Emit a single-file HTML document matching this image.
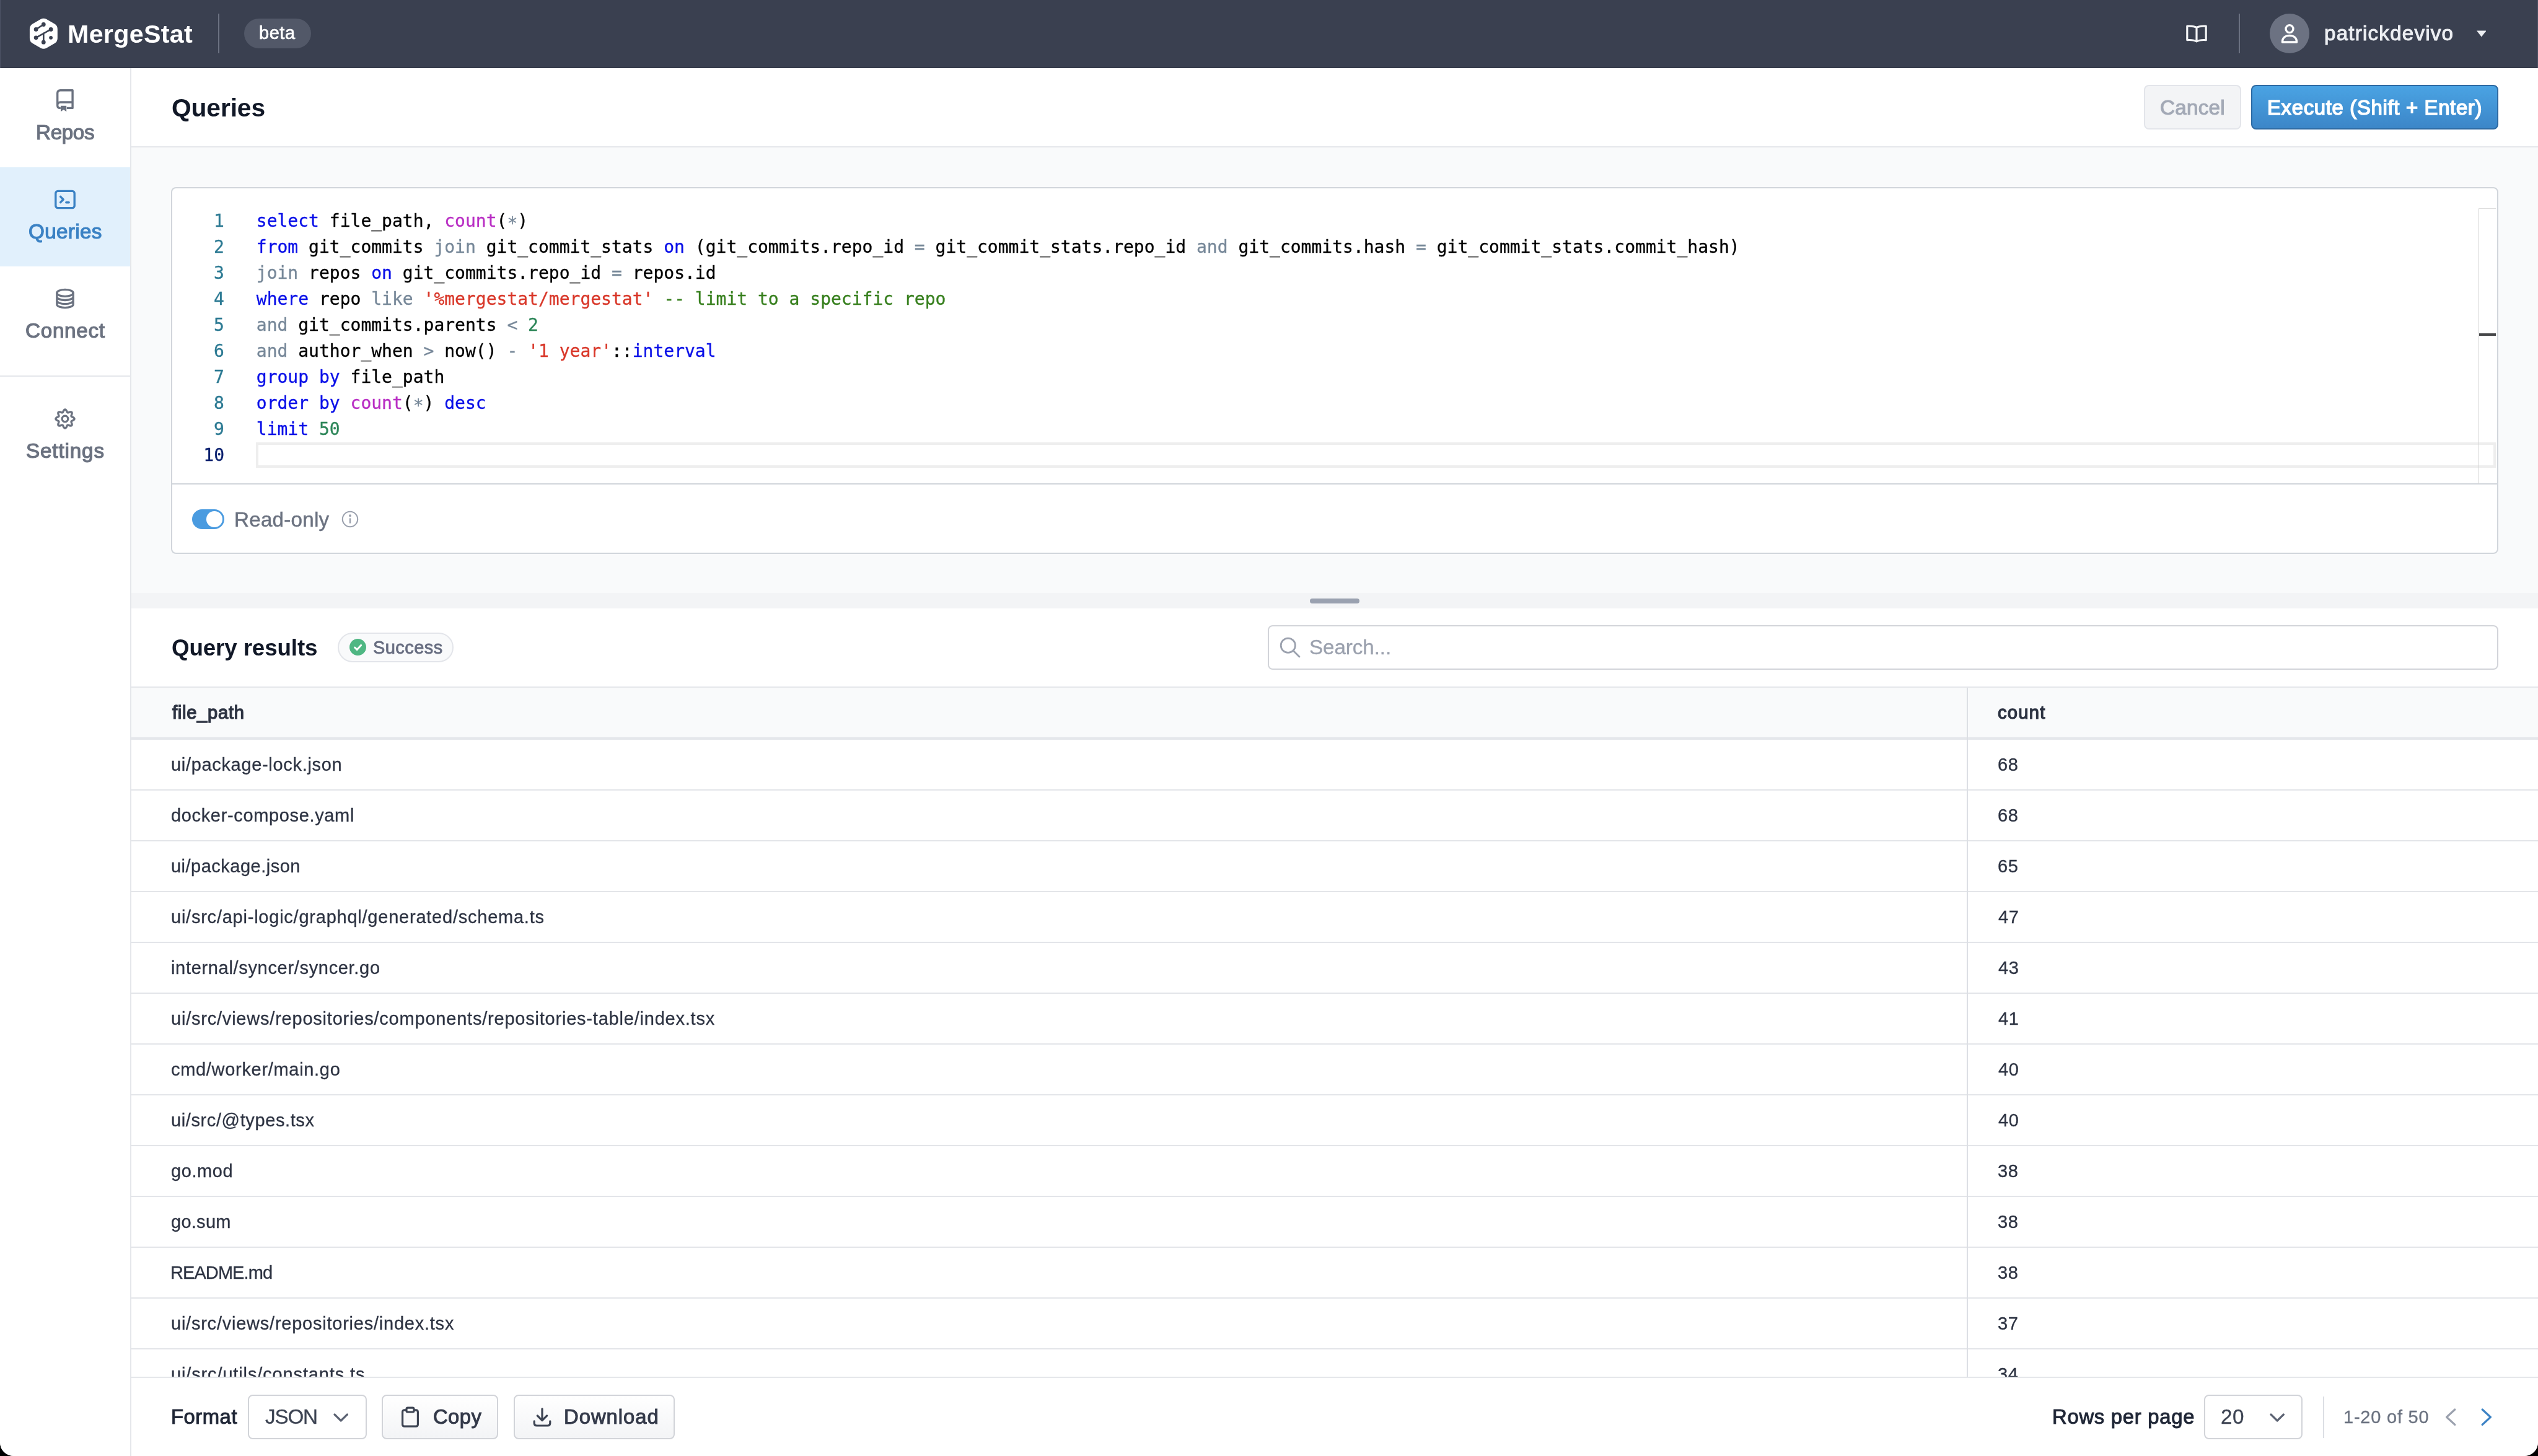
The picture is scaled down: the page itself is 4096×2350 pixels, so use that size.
<!DOCTYPE html>
<html lang="en">
<head>
<meta charset="utf-8">
<title>MergeStat - Queries</title>
<style>
*{box-sizing:border-box;margin:0;padding:0}
html,body{width:4096px;height:2350px;overflow:hidden;background:#000}
body{font-family:"Liberation Sans",sans-serif;color:#1f2636}
#app{position:absolute;left:0;top:0;width:4096px;height:2350px;will-change:transform;background:#fff;overflow:hidden;border-radius:0 0 22px 22px}
#app *{position:absolute}
.t{white-space:pre;font-family:"Liberation Sans",sans-serif}
.m{white-space:pre;font-family:"DejaVu Sans Mono","Liberation Mono",monospace;font-size:28px;line-height:33px;color:#000;-webkit-text-stroke:0.3px}
.m span{position:static !important}
.k{color:#0a10e8}.o{color:#778899}.f{color:#b92fc4}.s{color:#d9382a}.n{color:#2d8659}.c{color:#38801f}
.hl{left:212px;width:3884px;height:2px;background:#e3e5e9}
.bx{border:2px solid #d2d4d9;border-radius:8px}
</style>
</head>
<body>
<div id="app">

<!-- header -->
<div style="left:0;top:0;width:4096px;height:110px;background:#3a4050;border-bottom:1px solid #2f3443"></div>
<svg style="left:40px;top:24px;width:60px;height:60px" viewBox="20 12 30 30"><path d="M35.18 19.66 L41.64 23.39 L41.64 30.85 L35.18 34.58 L28.72 30.85 L28.72 23.39 Z" fill="#fff" stroke="#fff" stroke-width="9.52" stroke-linejoin="round"/><g stroke="#3a4050" stroke-width="1.3" fill="#3a4050" stroke-linecap="round"><path d="M29.05 23.7 L35.15 19.75 M29.05 30.4 L41.05 23.7 M35.15 26.9 V34.1" fill="none"/><circle cx="35.15" cy="19.75" r="1.05"/><circle cx="29.05" cy="23.7" r="1.05"/><circle cx="41.05" cy="23.7" r="1.05"/><circle cx="29.05" cy="30.4" r="1.05"/><circle cx="35.15" cy="34.1" r="1.05"/><circle cx="41.05" cy="30.4" r="1.45" stroke="none"/></g></svg>
<div style="left:0;top:0;width:1px;height:110px;background:#4d5365"></div>
<div style="left:4095px;top:0;width:1px;height:110px;background:#4d5365"></div>
<div style="left:352.4px;top:22px;width:2px;height:64px;background:#6b7181"></div>
<div style="left:394px;top:30.4px;width:108px;height:47.2px;border-radius:24px;background:#525868"></div>
<svg style="left:3525px;top:34px;width:40px;height:40px" viewBox="0 0 20 20" fill="none" stroke="#f3f4f6" stroke-width="1.6" stroke-linejoin="round" stroke-linecap="round"><path d="M10 5.2 C8.3 4.2 5.6 3.9 2.4 4.1 V15.3 C5.6 15.1 8.3 15.4 10 16.4 C11.7 15.4 14.4 15.1 17.6 15.3 V4.1 C14.4 3.9 11.7 4.2 10 5.2 Z M10 5.2 V16.4"/></svg>
<div style="left:3613px;top:22px;width:2px;height:64px;background:#6b7181"></div>
<div style="left:3662.6px;top:22px;width:64.4px;height:64.4px;border-radius:34px;background:#6c7282"></div>
<svg style="left:3674.8px;top:34px;width:40px;height:40px" viewBox="0 0 20 20" fill="none" stroke="#fff" stroke-width="1.7" stroke-linejoin="round"><circle cx="10" cy="6.3" r="3"/><path d="M4.2 17 C4.2 13.5 6.7 11.7 10 11.7 C13.3 11.7 15.8 13.5 15.8 17 Z"/></svg>
<svg style="left:3996.6px;top:49.2px;width:15.6px;height:10.4px" viewBox="0 0 12 8"><path d="M0 0.4 H12 L6 8 Z" fill="#eceef2"/></svg>

<!-- sidebar -->
<div style="left:0;top:110px;width:212px;height:2240px;background:#fff;border-right:2px solid #e5e7eb"></div>
<div style="left:0;top:270px;width:210px;height:160px;background:#e1f0fc"></div>
<div style="left:0;top:606px;width:210px;height:2px;background:#e5e7eb"></div>
<svg style="left:85px;top:142px;width:40px;height:40px" viewBox="0 0 20 20" fill="none" stroke="#6b7280" stroke-width="1.7" stroke-linejoin="round"><path d="M16.05 11.5 V1.85 H6.2 C4.7 1.85 3.85 2.8 3.85 4.3 V14 C3.85 15.4 4.6 16.2 5.9 16.2 H6.4 M11.4 16.2 H16.05 V11.5 H6.2 C4.7 11.5 3.85 12.4 3.85 13.8"/><path d="M6.5 14.4 V19.1 L8.8 17.5 L11.1 19.1 V14.4 Z" fill="#6b7280" stroke="none"/></svg>
<svg style="left:85px;top:302px;width:40px;height:40px" viewBox="0 0 20 20" fill="none" stroke="#3b82c4" stroke-width="1.7" stroke-linejoin="round" stroke-linecap="round"><rect x="2.4" y="3.2" width="15.2" height="13.6" rx="1.8"/><path d="M6.3 7.7 L8.6 10 L6.3 12.3 M10.9 12.4 H13.1"/></svg>
<svg style="left:85px;top:462px;width:40px;height:40px" viewBox="0 0 20 20" fill="none" stroke="#6b7280" stroke-width="1.65" stroke-linejoin="round" stroke-linecap="round"><ellipse cx="10" cy="5.4" rx="6.6" ry="2.75"/><path d="M3.4 5.4 V14.6 C3.4 16.1 6.35 17.35 10 17.35 C13.65 17.35 16.6 16.1 16.6 14.6 V5.4 M3.4 8.5 C3.4 10 6.35 11.25 10 11.25 C13.65 11.25 16.6 10 16.6 8.5 M3.4 11.55 C3.4 13.05 6.35 14.3 10 14.3 C13.65 14.3 16.6 13.05 16.6 11.55"/></svg>
<svg style="left:85px;top:656px;width:40px;height:40px" viewBox="0 0 20 20" fill="none" stroke="#6b7280" stroke-width="1.65" stroke-linejoin="round"><circle cx="10" cy="10" r="2.4"/><path d="M10.00 2.45 L10.48 2.61 L10.92 3.04 L11.27 3.62 L11.55 4.23 L11.80 4.71 L12.09 4.96 L12.47 4.99 L12.99 4.83 L13.61 4.60 L14.28 4.43 L14.89 4.43 L15.34 4.66 L15.57 5.11 L15.57 5.72 L15.40 6.39 L15.17 7.01 L15.01 7.53 L15.04 7.91 L15.29 8.20 L15.77 8.45 L16.38 8.73 L16.96 9.08 L17.39 9.52 L17.55 10.00 L17.39 10.48 L16.96 10.92 L16.38 11.27 L15.77 11.55 L15.29 11.80 L15.04 12.09 L15.01 12.47 L15.17 12.99 L15.40 13.61 L15.57 14.28 L15.57 14.89 L15.34 15.34 L14.89 15.57 L14.28 15.57 L13.61 15.40 L12.99 15.17 L12.47 15.01 L12.09 15.04 L11.80 15.29 L11.55 15.77 L11.27 16.38 L10.92 16.96 L10.48 17.39 L10.00 17.55 L9.52 17.39 L9.08 16.96 L8.73 16.38 L8.45 15.77 L8.20 15.29 L7.91 15.04 L7.53 15.01 L7.01 15.17 L6.39 15.40 L5.72 15.57 L5.11 15.57 L4.66 15.34 L4.43 14.89 L4.43 14.28 L4.60 13.61 L4.83 12.99 L4.99 12.47 L4.96 12.09 L4.71 11.80 L4.23 11.55 L3.62 11.27 L3.04 10.92 L2.61 10.48 L2.45 10.00 L2.61 9.52 L3.04 9.08 L3.62 8.73 L4.23 8.45 L4.71 8.20 L4.96 7.91 L4.99 7.53 L4.83 7.01 L4.60 6.39 L4.43 5.72 L4.43 5.11 L4.66 4.66 L5.11 4.43 L5.72 4.43 L6.39 4.60 L7.01 4.83 L7.53 4.99 L7.91 4.96 L8.20 4.71 L8.45 4.23 L8.73 3.62 L9.08 3.04 L9.52 2.61 Z"/></svg>

<!-- title bar -->
<div style="left:212px;top:110px;width:3884px;height:128px;background:#fff;border-bottom:2px solid #e5e7eb"></div>
<div style="left:3460.4px;top:137.2px;width:156.2px;height:71.6px;border:2px solid #e3e5ea;background:#f3f4f6;border-radius:8px"></div>
<div style="left:3633.2px;top:137.2px;width:398.6px;height:71.6px;border:2px solid #2d6aa3;background:linear-gradient(#4aa3e3,#3c86c8);border-radius:8px"></div>

<!-- editor area -->
<div style="left:212px;top:238px;width:3884px;height:720px;background:#f9fafb"></div>
<div class="bx" style="left:276.4px;top:302.2px;width:3755.6px;height:591.6px;background:#fff;border-color:#d1d5db"></div>
<div style="left:278px;top:780.4px;width:3752px;height:2px;background:#d1d5db"></div>
<div style="left:413px;top:714px;width:3614.6px;height:41px;border:4px solid #eeeeee"></div>
<div style="left:4000px;top:336px;width:1px;height:444.6px;background:#d4d4d4"></div>
<div style="left:4000px;top:336px;width:27.6px;height:1px;background:#dedede"></div>
<div style="left:4001px;top:538px;width:26.8px;height:4px;background:#454648"></div>
<span class="m" style="left:345.1px;top:340px;color:#2c7a93">1</span>
<span class="m" style="left:413.8px;top:340px"><span class="k">select</span> file_path, <span class="f">count</span>(<span class="o" style="vertical-align:-4px">*</span>)</span>
<span class="m" style="left:345.1px;top:382px;color:#2c7a93">2</span>
<span class="m" style="left:413.8px;top:382px"><span class="k">from</span> git_commits <span class="o">join</span> git_commit_stats <span class="k">on</span> (git_commits.repo_id <span class="o">=</span> git_commit_stats.repo_id <span class="o">and</span> git_commits.hash <span class="o">=</span> git_commit_stats.commit_hash)</span>
<span class="m" style="left:345.1px;top:424px;color:#2c7a93">3</span>
<span class="m" style="left:413.8px;top:424px"><span class="o">join</span> repos <span class="k">on</span> git_commits.repo_id <span class="o">=</span> repos.id</span>
<span class="m" style="left:345.1px;top:466px;color:#2c7a93">4</span>
<span class="m" style="left:413.8px;top:466px"><span class="k">where</span> repo <span class="o">like</span> <span class="s">&#x27;%mergestat/mergestat&#x27;</span> <span class="c">-- limit to a specific repo</span></span>
<span class="m" style="left:345.1px;top:508px;color:#2c7a93">5</span>
<span class="m" style="left:413.8px;top:508px"><span class="o">and</span> git_commits.parents <span class="o">&lt;</span> <span class="n">2</span></span>
<span class="m" style="left:345.1px;top:550px;color:#2c7a93">6</span>
<span class="m" style="left:413.8px;top:550px"><span class="o">and</span> author_when <span class="o">&gt;</span> now() <span class="o">-</span> <span class="s">&#x27;1 year&#x27;</span>::<span class="k">interval</span></span>
<span class="m" style="left:345.1px;top:592px;color:#2c7a93">7</span>
<span class="m" style="left:413.8px;top:592px"><span class="k">group</span> <span class="k">by</span> file_path</span>
<span class="m" style="left:345.1px;top:634px;color:#2c7a93">8</span>
<span class="m" style="left:413.8px;top:634px"><span class="k">order</span> <span class="k">by</span> <span class="f">count</span>(<span class="o" style="vertical-align:-4px">*</span>) <span class="k">desc</span></span>
<span class="m" style="left:345.1px;top:676px;color:#2c7a93">9</span>
<span class="m" style="left:413.8px;top:676px"><span class="k">limit</span> <span class="n">50</span></span>
<span class="m" style="left:328.3px;top:718px;color:#0b216f">10</span>
<div style="left:310px;top:822px;width:52px;height:32.4px;border-radius:16.2px;background:#4a9be0"></div>
<div style="left:333.4px;top:825.4px;width:25.6px;height:25.6px;border-radius:12.8px;background:#fff"></div>
<svg style="left:549.8px;top:822.8px;width:30px;height:30px" viewBox="0 0 15 15" fill="none" stroke="#9ba1ae" stroke-width="1.05"><circle cx="7.5" cy="7.5" r="6.1"/><path d="M7.5 6.7 V10.8" stroke-width="1.2"/><circle cx="7.5" cy="4.6" r="0.45" fill="#9ba1ae"/></svg>

<!-- resizer -->
<div style="left:212px;top:957px;width:3884px;height:24.6px;background:#f3f4f6"></div>
<div style="left:2114px;top:966px;width:80px;height:8px;border-radius:4px;background:#9aa1b0"></div>

<!-- results header -->
<div style="left:544.6px;top:1021.2px;width:187.4px;height:47.4px;border:2px solid #e3e5ea;border-radius:24px;background:#f9fafb"></div>
<div style="left:564.4px;top:1031.4px;width:27px;height:27px;border-radius:14px;background:#4fb783"></div>
<svg style="left:564.4px;top:1031.4px;width:27px;height:27px" viewBox="0 0 13.5 13.5" fill="none" stroke="#fff" stroke-width="1.5" stroke-linecap="round" stroke-linejoin="round"><path d="M4.3 7 L6.1 8.8 L9.3 5.2"/></svg>
<div class="bx" style="left:2046px;top:1009px;width:1986px;height:72px;background:#fff"></div>
<svg style="left:2062px;top:1025.2px;width:40px;height:40px" viewBox="0 0 20 20" fill="none" stroke="#9ba1ae" stroke-width="1.4" stroke-linecap="round"><circle cx="8.4" cy="8.4" r="5.8"/><path d="M12.6 12.6 L17.5 17.5"/></svg>

<!-- table -->
<div style="left:212px;top:1108px;width:3884px;height:86px;background:#f9fafb;border-top:2px solid #e5e7eb;border-bottom:4px solid #e5e7eb"></div>
<i class="hl" style="top:1274px"></i>
<i class="hl" style="top:1356px"></i>
<i class="hl" style="top:1438px"></i>
<i class="hl" style="top:1520px"></i>
<i class="hl" style="top:1602px"></i>
<i class="hl" style="top:1684px"></i>
<i class="hl" style="top:1766px"></i>
<i class="hl" style="top:1848px"></i>
<i class="hl" style="top:1930px"></i>
<i class="hl" style="top:2012px"></i>
<i class="hl" style="top:2094px"></i>
<i class="hl" style="top:2176px"></i>
<i class="hl" style="top:2258px"></i>
<span class="t" style="left:276px;top:1218px;font-size:29px;line-height:32px;font-weight:400;color:#2d3342;letter-spacing:0.677px;-webkit-text-stroke:0.3px #2d3342">ui/package-lock.json</span>
<span class="t" style="left:3224px;top:1218px;font-size:29px;line-height:32px;font-weight:400;color:#2d3342;letter-spacing:0.700px;-webkit-text-stroke:0.3px #2d3342">68</span>
<span class="t" style="left:276px;top:1300px;font-size:29px;line-height:32px;font-weight:400;color:#2d3342;letter-spacing:0.649px;-webkit-text-stroke:0.3px #2d3342">docker-compose.yaml</span>
<span class="t" style="left:3224px;top:1300px;font-size:29px;line-height:32px;font-weight:400;color:#2d3342;letter-spacing:0.700px;-webkit-text-stroke:0.3px #2d3342">68</span>
<span class="t" style="left:276px;top:1382px;font-size:29px;line-height:32px;font-weight:400;color:#2d3342;letter-spacing:0.493px;-webkit-text-stroke:0.3px #2d3342">ui/package.json</span>
<span class="t" style="left:3224px;top:1382px;font-size:29px;line-height:32px;font-weight:400;color:#2d3342;letter-spacing:0.700px;-webkit-text-stroke:0.3px #2d3342">65</span>
<span class="t" style="left:276px;top:1464px;font-size:29px;line-height:32px;font-weight:400;color:#2d3342;letter-spacing:0.767px;-webkit-text-stroke:0.3px #2d3342">ui/src/api-logic/graphql/generated/schema.ts</span>
<span class="t" style="left:3225px;top:1464px;font-size:29px;line-height:32px;font-weight:400;color:#2d3342;letter-spacing:0.700px;-webkit-text-stroke:0.3px #2d3342">47</span>
<span class="t" style="left:276px;top:1546px;font-size:29px;line-height:32px;font-weight:400;color:#2d3342;letter-spacing:0.677px;-webkit-text-stroke:0.3px #2d3342">internal/syncer/syncer.go</span>
<span class="t" style="left:3225px;top:1546px;font-size:29px;line-height:32px;font-weight:400;color:#2d3342;letter-spacing:0.700px;-webkit-text-stroke:0.3px #2d3342">43</span>
<span class="t" style="left:276px;top:1628px;font-size:29px;line-height:32px;font-weight:400;color:#2d3342;letter-spacing:0.787px;-webkit-text-stroke:0.3px #2d3342">ui/src/views/repositories/components/repositories-table/index.tsx</span>
<span class="t" style="left:3225px;top:1628px;font-size:29px;line-height:32px;font-weight:400;color:#2d3342;letter-spacing:0.700px;-webkit-text-stroke:0.3px #2d3342">41</span>
<span class="t" style="left:276px;top:1710px;font-size:29px;line-height:32px;font-weight:400;color:#2d3342;letter-spacing:0.690px;-webkit-text-stroke:0.3px #2d3342">cmd/worker/main.go</span>
<span class="t" style="left:3225px;top:1710px;font-size:29px;line-height:32px;font-weight:400;color:#2d3342;letter-spacing:0.700px;-webkit-text-stroke:0.3px #2d3342">40</span>
<span class="t" style="left:276px;top:1792px;font-size:29px;line-height:32px;font-weight:400;color:#2d3342;letter-spacing:0.611px;-webkit-text-stroke:0.3px #2d3342">ui/src/@types.tsx</span>
<span class="t" style="left:3225px;top:1792px;font-size:29px;line-height:32px;font-weight:400;color:#2d3342;letter-spacing:0.700px;-webkit-text-stroke:0.3px #2d3342">40</span>
<span class="t" style="left:276px;top:1874px;font-size:29px;line-height:32px;font-weight:400;color:#2d3342;letter-spacing:0.579px;-webkit-text-stroke:0.3px #2d3342">go.mod</span>
<span class="t" style="left:3224px;top:1874px;font-size:29px;line-height:32px;font-weight:400;color:#2d3342;letter-spacing:0.700px;-webkit-text-stroke:0.3px #2d3342">38</span>
<span class="t" style="left:276px;top:1956px;font-size:29px;line-height:32px;font-weight:400;color:#2d3342;letter-spacing:0.270px;-webkit-text-stroke:0.3px #2d3342">go.sum</span>
<span class="t" style="left:3224px;top:1956px;font-size:29px;line-height:32px;font-weight:400;color:#2d3342;letter-spacing:0.700px;-webkit-text-stroke:0.3px #2d3342">38</span>
<span class="t" style="left:275px;top:2038px;font-size:29px;line-height:32px;font-weight:400;color:#2d3342;letter-spacing:-0.924px;-webkit-text-stroke:0.3px #2d3342">README.md</span>
<span class="t" style="left:3224px;top:2038px;font-size:29px;line-height:32px;font-weight:400;color:#2d3342;letter-spacing:0.700px;-webkit-text-stroke:0.3px #2d3342">38</span>
<span class="t" style="left:276px;top:2120px;font-size:29px;line-height:32px;font-weight:400;color:#2d3342;letter-spacing:0.767px;-webkit-text-stroke:0.3px #2d3342">ui/src/views/repositories/index.tsx</span>
<span class="t" style="left:3224px;top:2120px;font-size:29px;line-height:32px;font-weight:400;color:#2d3342;letter-spacing:0.700px;-webkit-text-stroke:0.3px #2d3342">37</span>
<span class="t" style="left:276px;top:2202px;font-size:29px;line-height:32px;font-weight:400;color:#2d3342;letter-spacing:0.862px;-webkit-text-stroke:0.3px #2d3342">ui/src/utils/constants.ts</span>
<span class="t" style="left:3224px;top:2202px;font-size:29px;line-height:32px;font-weight:400;color:#2d3342;letter-spacing:0.700px;-webkit-text-stroke:0.3px #2d3342">34</span>
<div style="left:3174px;top:1110px;width:2px;height:1114px;background:#dcdfe4"></div>

<!-- footer -->
<div style="left:212px;top:2222px;width:3884px;height:128px;background:#fff;border-top:2px solid #e5e7eb"></div>
<div class="bx" style="left:400px;top:2251px;width:191.6px;height:72px;background:#fff"></div>
<svg style="left:530px;top:2267px;width:40px;height:40px" viewBox="0 0 20 20" fill="none" stroke="#5b6272" stroke-width="1.6" stroke-linecap="round" stroke-linejoin="round"><path d="M5 8 L10.1 13 L15.2 8"/></svg>
<div class="bx" style="left:616px;top:2251px;width:188px;height:72px;background:linear-gradient(#fff,#f3f4f6)"></div>
<svg style="left:642px;top:2267px;width:40px;height:40px" viewBox="0 0 20 20" fill="none" stroke="#3d4453" stroke-width="1.6" stroke-linejoin="round"><path d="M7 4.4 H5.4 C4.4 4.4 3.8 5 3.8 6 V16 C3.8 17 4.4 17.6 5.4 17.6 H14.6 C15.6 17.6 16.2 17 16.2 16 V6 C16.2 5 15.6 4.4 14.6 4.4 H13"/><rect x="7" y="2.6" width="6" height="3.4" rx="1"/></svg>
<div class="bx" style="left:829px;top:2251px;width:260.4px;height:72px;background:linear-gradient(#fff,#f3f4f6)"></div>
<svg style="left:854.8px;top:2267px;width:40px;height:40px" viewBox="0 0 20 20" fill="none" stroke="#3d4453" stroke-width="1.6" stroke-linecap="round" stroke-linejoin="round"><path d="M10 3.4 V12.6 M6.2 9 L10 12.8 L13.8 9 M3.6 13.4 V15 C3.6 16.2 4.4 17 5.6 17 H14.4 C15.6 17 16.4 16.2 16.4 15 V13.4"/></svg>
<div class="bx" style="left:3557px;top:2251px;width:159px;height:72px;background:#fff"></div>
<svg style="left:3655px;top:2267px;width:40px;height:40px" viewBox="0 0 20 20" fill="none" stroke="#5b6272" stroke-width="1.6" stroke-linecap="round" stroke-linejoin="round"><path d="M5 8 L10.1 13 L15.2 8"/></svg>
<div style="left:3749.2px;top:2254px;width:2px;height:67px;background:#dcdfe4"></div>
<svg style="left:3935.2px;top:2267px;width:40px;height:40px" viewBox="0 0 20 20" fill="none" stroke="#9ba1ae" stroke-width="1.6" stroke-linecap="round" stroke-linejoin="round"><path d="M13.4 4 L6.8 10.1 L13.4 16.2"/></svg>
<svg style="left:3993.2px;top:2267px;width:40px;height:40px" viewBox="0 0 20 20" fill="none" stroke="#3b82c4" stroke-width="1.6" stroke-linecap="round" stroke-linejoin="round"><path d="M6.6 4 L13.2 10.1 L6.6 16.2"/></svg>

<span class="t" style="left:109px;top:32px;font-size:41.2px;line-height:46px;font-weight:700;color:#ffffff;letter-spacing:0.324px">MergeStat</span>
<span class="t" style="left:418px;top:37px;font-size:29px;line-height:32px;font-weight:400;color:#ffffff;letter-spacing:0.525px;-webkit-text-stroke:0.7px #ffffff">beta</span>
<span class="t" style="left:3751px;top:35px;font-size:33.2px;line-height:37px;font-weight:400;color:#eceef2;letter-spacing:1.197px;-webkit-text-stroke:1.0px #eceef2">patrickdevivo</span>
<span class="t" style="left:58px;top:195px;font-size:33.2px;line-height:37px;font-weight:400;color:#6b7280;letter-spacing:-0.336px;-webkit-text-stroke:1.2px #6b7280">Repos</span>
<span class="t" style="left:46px;top:355px;font-size:33.2px;line-height:37px;font-weight:400;color:#3b82c4;letter-spacing:0.362px;-webkit-text-stroke:1.2px #3b82c4">Queries</span>
<span class="t" style="left:41px;top:515px;font-size:33.2px;line-height:37px;font-weight:400;color:#6b7280;letter-spacing:0.733px;-webkit-text-stroke:1.2px #6b7280">Connect</span>
<span class="t" style="left:42px;top:709px;font-size:33.2px;line-height:37px;font-weight:400;color:#6b7280;letter-spacing:0.867px;-webkit-text-stroke:1.2px #6b7280">Settings</span>
<span class="t" style="left:277px;top:151px;font-size:40.8px;line-height:46px;font-weight:700;color:#111827;letter-spacing:-0.141px">Queries</span>
<span class="t" style="left:3486px;top:155px;font-size:33.2px;line-height:37px;font-weight:400;color:#a3a9b6;letter-spacing:0.272px;-webkit-text-stroke:1.1px #a3a9b6">Cancel</span>
<span class="t" style="left:3659px;top:155px;font-size:32.8px;line-height:37px;font-weight:400;color:#ffffff;letter-spacing:0.707px;-webkit-text-stroke:1.5px #ffffff">Execute (Shift + Enter)</span>
<span class="t" style="left:378px;top:820px;font-size:33.2px;line-height:37px;font-weight:400;color:#6b7280;letter-spacing:0.227px;-webkit-text-stroke:0.5px #6b7280">Read-only</span>
<span class="t" style="left:277px;top:1025px;font-size:36.8px;line-height:41px;font-weight:700;color:#111827;letter-spacing:-0.149px">Query results</span>
<span class="t" style="left:602px;top:1029px;font-size:29px;line-height:32px;font-weight:400;color:#676d80;letter-spacing:0.448px;-webkit-text-stroke:0.8px #676d80">Success</span>
<span class="t" style="left:2113px;top:1026px;font-size:33.2px;line-height:37px;font-weight:400;color:#9ba1ae;letter-spacing:-0.088px;-webkit-text-stroke:0.3px #9ba1ae">Search...</span>
<span class="t" style="left:278px;top:1134px;font-size:29.2px;line-height:32px;font-weight:400;color:#2d3342;letter-spacing:0.697px;-webkit-text-stroke:1.3px #2d3342">file_path</span>
<span class="t" style="left:3224px;top:1134px;font-size:29.2px;line-height:32px;font-weight:400;color:#2d3342;letter-spacing:1.251px;-webkit-text-stroke:1.3px #2d3342">count</span>
<span class="t" style="left:276px;top:2268px;font-size:32.8px;line-height:37px;font-weight:400;color:#1f2636;letter-spacing:0.527px;-webkit-text-stroke:1.0px #1f2636">Format</span>
<span class="t" style="left:428px;top:2268px;font-size:33.2px;line-height:37px;font-weight:400;color:#3d4453;letter-spacing:-1.150px;-webkit-text-stroke:0.3px #3d4453">JSON</span>
<span class="t" style="left:699px;top:2268px;font-size:32.8px;line-height:37px;font-weight:400;color:#333949;letter-spacing:0.407px;-webkit-text-stroke:1.0px #333949">Copy</span>
<span class="t" style="left:910px;top:2268px;font-size:32.8px;line-height:37px;font-weight:400;color:#333949;letter-spacing:0.997px;-webkit-text-stroke:1.0px #333949">Download</span>
<span class="t" style="left:3312px;top:2268px;font-size:32.8px;line-height:37px;font-weight:400;color:#1f2636;letter-spacing:0.736px;-webkit-text-stroke:1.0px #1f2636">Rows per page</span>
<span class="t" style="left:3584px;top:2268px;font-size:33.2px;line-height:37px;font-weight:400;color:#3d4453;letter-spacing:0.635px;-webkit-text-stroke:0.3px #3d4453">20</span>
<span class="t" style="left:3782px;top:2271px;font-size:29px;line-height:32px;font-weight:400;color:#6b7280;letter-spacing:0.780px;-webkit-text-stroke:0.3px #6b7280">1-20 of 50</span>
</div>
</body>
</html>
